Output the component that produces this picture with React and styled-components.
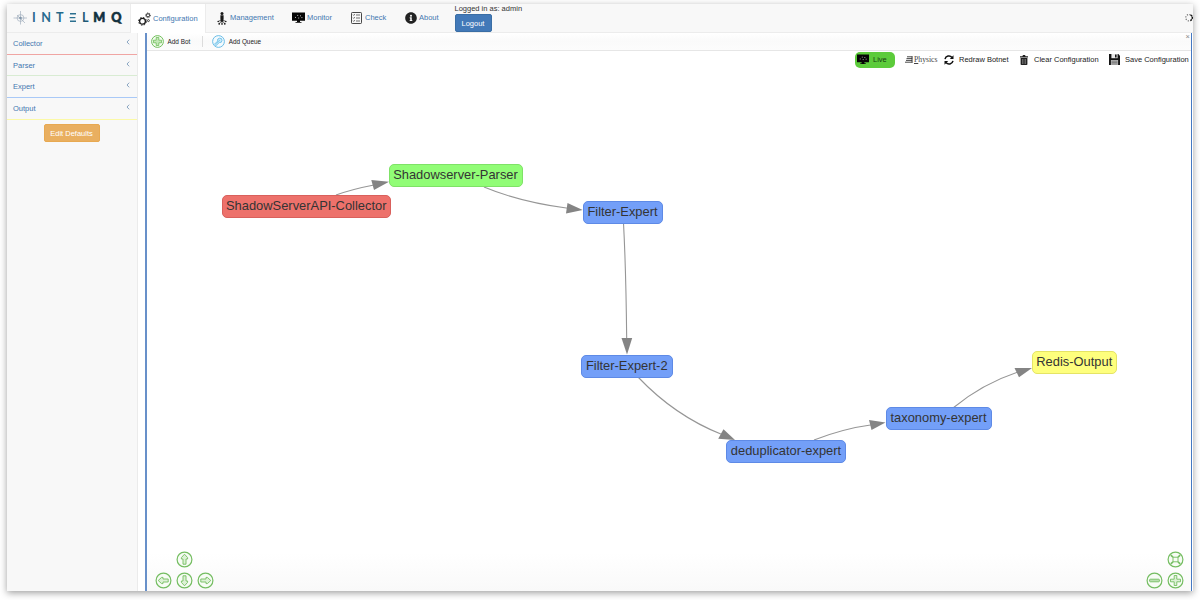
import React from "react";
import styled, { createGlobalStyle } from "styled-components";
import { FaInfoCircle } from "react-icons/fa";

const GlobalStyle = createGlobalStyle`
  * {
    box-sizing: border-box;
  }
  body {
    margin: 0;
    background: #fff;
    font-family: "Liberation Sans", Arial, sans-serif;
    font-size: 7.5px;
    color: #333;
  }
`;

const Page = styled.div`
  width: 1200px;
  height: 600px;
  padding: 4px 7px 9px;
  overflow: hidden;
`;

const AppWindow = styled.div`
  height: 587px;
  display: flex;
  flex-direction: column;
  background: #fff;
  box-shadow: 0 2px 7px rgba(0, 0, 0, 0.38);
`;

const Navbar = styled.nav`
  height: 29px;
  flex: none;
  display: flex;
  background: #f8f8f8;
  border-bottom: 1px solid #ececec;
`;

const Brand = styled.div`
  width: 123px;
  height: 28px;
`;

const NavItem = styled.a`
  width: ${(props) => props.$width}px;
  height: ${(props) => (props.$active ? 29 : 28)}px;
  padding-left: ${(props) => props.$pad}px;
  display: flex;
  align-items: center;
  gap: ${(props) => props.$gap || 2}px;
  color: #4377b0;
  background: ${(props) => (props.$active ? "#fff" : "transparent")};
  border-left: 1px solid ${(props) => (props.$active ? "#ececec" : "transparent")};
  border-right: 1px solid ${(props) => (props.$active ? "#ececec" : "transparent")};
  white-space: nowrap;

  svg {
    flex: none;
  }
  span {
    margin-top: -1px;
  }
`;

const Account = styled.div`
  padding-left: 0.5px;
  line-height: 9px;
  color: #333;
  flex: 1;
`;

const LogoutButton = styled.button`
  display: block;
  width: 37px;
  height: 18px;
  padding: 0;
  margin-top: 1px;
  border: 1px solid #3a6ea5;
  border-radius: 2px;
  background: #4279b8;
  color: #fff;
  font: inherit;
`;

const Spinner = styled.div`
  width: 9px;
  padding-top: 9px;
`;

const Main = styled.div`
  flex: 1;
  display: flex;
`;

const Sidebar = styled.aside`
  width: 131px;
  background: #f8f8f8;
  border-right: 1px solid #ebebeb;
`;

const BotGroup = styled.div`
  height: ${(props) => props.$height}px;
  padding: 0 7px 0 6px;
  display: flex;
  justify-content: space-between;
  align-items: center;
  color: #4377b0;
  border-bottom: 1px solid ${(props) => props.$color};

  svg {
    margin-top: -3px;
  }
`;

const DefaultsButton = styled.button`
  display: block;
  width: 56px;
  height: 18px;
  margin: 4px 0 0 36.5px;
  padding: 0;
  border: 1px solid #e8a951;
  border-radius: 2px;
  background: #e9af60;
  color: #fff;
  font: inherit;
`;

const Network = styled.section`
  width: 1047px;
  margin-left: 7px;
  display: flex;
  flex-direction: column;
  border-left: 2px solid #6890c9;
  border-right: 1px solid #4478c2;
`;

const Manipulation = styled.div`
  height: 18px;
  padding-left: 4px;
  display: flex;
  align-items: center;
  background: linear-gradient(#fff, #fafafa 50%, #fcfcfc);
  border-bottom: 1px solid #e6e6e6;
  font-size: 6.4px;
  color: #222;
`;

const ManipulationItem = styled.div`
  display: flex;
  align-items: center;
  gap: 3.5px;
`;

const Separator = styled.i`
  width: 1px;
  height: 11px;
  margin: 0 9px 0 12px;
  background: #dcdcdc;
`;

const Close = styled.span`
  margin: -10px 1px 0 auto;
  font-size: 7.5px;
  color: #888;
`;

const Canvas = styled.div`
  position: relative;
  flex: 1;
  background: linear-gradient(#fff 93%, #f9f9f9);
`;

const Actions = styled.div`
  position: relative;
  height: 17px;
  display: flex;
  align-items: center;
  padding-left: 708px;
  color: #222;
  white-space: nowrap;
`;

const Action = styled.div`
  width: ${(props) => props.$width}px;
  display: flex;
  align-items: center;
  gap: ${(props) => props.$gap}px;

  svg {
    flex: none;
  }
`;

const LiveButton = styled.div`
  width: 40px;
  height: 16px;
  margin-right: 10px;
  padding-left: 2px;
  display: flex;
  align-items: center;
  gap: 4px;
  border-radius: 5px;
  background: #5ccb3b;
  color: #173d10;
`;

const Physics = styled.div`
  width: 39px;
  display: flex;
  align-items: center;
  gap: 1px;
  font-family: "Liberation Serif", serif;
  font-size: 7.7px;
  color: #444;

  u {
    text-decoration-thickness: 0.5px;
  }
`;

const Edges = styled.svg`
  position: absolute;
  left: 0;
  top: 0;
`;

const Bot = styled.div`
  position: absolute;
  left: ${(props) => props.$x - 147}px;
  top: ${(props) => props.$y - 51}px;
  width: ${(props) => props.$width}px;
  height: 23px;
  border: 1px solid ${(props) => props.$border};
  border-radius: 5px;
  background: ${(props) => props.$fill};
  color: #343434;
  font-size: 12.9px;
  line-height: 20px;
  text-align: center;
  white-space: nowrap;
`;

const Controls = styled.div`
  position: absolute;
  bottom: 2.5px;
  ${(props) => props.$side}: 7.5px;
  display: grid;
  grid-template-columns: repeat(${(props) => props.$columns}, 17px);
  gap: 4px;
`;

const ControlSlot = styled.div`
  grid-column: ${(props) => props.$column};
  grid-row: ${(props) => props.$row};
  height: 17px;
`;

const Logo = () => (
  <svg width="123" height="28" viewBox="7 4 123 28">
    <g fill="none" stroke="#a3b0be" strokeWidth="0.7">
      <circle cx="20.5" cy="18" r="3.4" />
      <path d="M13.5 18H27M20.5 11V24.5M17 15L25 23" />
    </g>
    <circle cx="20.5" cy="18" r="1.3" fill="#8296aa" />
    <g fontFamily="Lato, sans-serif" fontSize="12.6" fontWeight="700">
      <text x="32" y="22" fill="#29688f">I</text>
      <text x="41.2" y="22" fill="#286b90">N</text>
      <text x="56" y="22" fill="#25698a">T</text>
      <path d="M70 13.7H76M69.6 17.6H75.4M70 21.3H76" stroke="#2c7090" strokeWidth="1.4" />
      <text x="82" y="22" fill="#1f5975">L</text>
      <g fill="#12303f" stroke="#12303f" strokeWidth="0.6" fontWeight="900">
        <text x="93.2" y="22">M</text>
        <text x="111.3" y="22">Q</text>
      </g>
    </g>
  </svg>
);

const GearsIcon = () => (
  <svg width="13" height="14" viewBox="0 0 13 14" fill="none" stroke="#181818">
    <circle cx="4.5" cy="9.3" r="2.9" strokeWidth="1.3" />
    <circle cx="4.5" cy="9.3" r="3.9" strokeWidth="1" strokeDasharray="1.55 1.51" />
    <circle cx="10" cy="3.3" r="1.6" strokeWidth="0.9" />
    <circle cx="10" cy="3.3" r="2.4" strokeWidth="0.8" strokeDasharray="0.94 0.94" />
    <circle cx="10.4" cy="8.6" r="1" strokeWidth="0.8" />
  </svg>
);

const ManagementIcon = () => (
  <svg width="10" height="13" viewBox="0 0 10 13" fill="#181818">
    <circle cx="5" cy="1.6" r="1.5" />
    <path d="M3.4 3.2H6.6V7L5.9 9.7H4.1L3.4 7Z" />
    <path d="M5 8V12M4.3 8L1.2 9.5M5.7 8L8.8 9.5M4.4 9L2.3 11.7M5.6 9L7.7 11.7" stroke="#181818" strokeWidth="0.7" />
    <circle cx="1.2" cy="9.5" r="0.8" />
    <circle cx="8.8" cy="9.5" r="0.8" />
    <circle cx="2.2" cy="11.8" r="0.9" />
    <circle cx="7.8" cy="11.8" r="0.9" />
    <circle cx="5" cy="12.1" r="0.8" />
  </svg>
);

const ScreenIcon = ({ size = 13 }) => (
  <svg width={size} height={size * 0.85} viewBox="0 0 13 11">
    <path d="M0 0.5H13V8.8H8V10H9.5V10.8H3.5V10H5V8.8H0Z" fill="#050505" />
    <path d="M3 5.4H4M5.2 3.4H6.2M6.2 6H7.2M8 3.8H9M9.4 5.6H10.4" fill="none" stroke="#ccc" strokeWidth="0.9" />
  </svg>
);

const CheckIcon = () => (
  <svg width="11" height="12" viewBox="0 0 11 12" fill="none" stroke="#333">
    <rect x="0.5" y="0.5" width="10" height="11" rx="0.8" strokeWidth="0.9" />
    <path d="M2 2.7L2.7 3.4L3.8 2M2 5.7L2.7 6.4L3.8 5M2 8.7L2.7 9.4L3.8 8" strokeWidth="0.7" />
    <path d="M5 3H9M5 6H9M5 9H9" strokeWidth="0.7" />
  </svg>
);

const RefreshIcon = () => (
  <svg width="10" height="10" viewBox="0 0 10 10" fill="none" stroke="#111" strokeWidth="1.5">
    <path d="M1 4.1A4 4 0 0 1 8 2.4M9 5.9A4 4 0 0 1 2 7.6" />
    <path d="M9.5 0.3V4H5.8ZM0.5 9.7V6H4.2Z" fill="#111" stroke="none" />
  </svg>
);

const TrashIcon = () => (
  <svg width="8" height="10" viewBox="0 0 8 10">
    <path d="M0 1.2H2.4L3 0H5L5.6 1.2H8V2.4H0ZM0.6 3H7.4V9.2Q7.4 10 6.6 10H1.4Q0.6 10 0.6 9.2Z" fill="#222" />
    <path d="M2.5 4V9M4 4V9M5.5 4V9" stroke="#aaa" strokeWidth="0.5" />
  </svg>
);

const SaveIcon = () => (
  <svg width="11" height="11" viewBox="0 0 11 11">
    <path d="M0 0H9.3L11 1.7V11H0Z" fill="#151515" />
    <path d="M2.4 0H8.6V4.2H2.4Z" fill="#e9e9e9" />
    <path d="M6 0.4H7.6V3.6H6Z" fill="#151515" />
    <path d="M1.9 6H9.1V11H1.9Z" fill="#bbb" />
    <path d="M2.5 7.2H8.5M2.5 8.6H8.5M2.5 10H8.5" stroke="#555" strokeWidth="0.6" />
  </svg>
);

const PhysicsIcon = () => (
  <svg width="8" height="7" viewBox="0 0 8 7" stroke="#333" strokeWidth="0.9">
    <path d="M2 0.8H7.6M1.5 2.6H7.3M1 4.4H7.2M0 6.2H7.6M7 0.5V6.5" fill="none" />
  </svg>
);

const AddBotIcon = () => (
  <svg width="13" height="13" viewBox="0 0 13 13">
    <circle cx="6.5" cy="6.5" r="5.9" fill="#f3fbef" stroke="#62b84b" strokeWidth="0.9" />
    <path d="M5.2 2.5H7.8V5.2H10.5V7.8H7.8V10.5H5.2V7.8H2.5V5.2H5.2Z" fill="#c3e7b7" stroke="#62b84b" strokeWidth="0.7" />
  </svg>
);

const AddQueueIcon = () => (
  <svg width="13" height="13" viewBox="0 0 13 13" fill="none" stroke="#5bb7e4">
    <circle cx="6.5" cy="6.5" r="5.9" fill="#f3fafe" strokeWidth="0.9" />
    <path d="M2.5 9.2L5.7 6A2.2 2.2 0 1 1 7.3 7.5L4 10.6Z" fill="#ccebf9" strokeWidth="0.8" />
    <path d="M4.3 8.6L8 5" strokeWidth="0.6" />
  </svg>
);

const ARROW = "M8.5 3.2L11.6 6.6V8H10V13.2H7V8H5.4V6.6Z";

const ControlIcon = ({ type }) => (
  <svg width="17" height="17" viewBox="0 0 17 17" fill="none" stroke="#74bd61" strokeWidth="0.9">
    <circle cx="8.5" cy="8.5" r="7.4" fill="#f7fcf5" strokeWidth="1.2" />
    {type === "up" && <path d={ARROW} fill="#dcf1d5" />}
    {type === "right" && <path d={ARROW} fill="#dcf1d5" transform="rotate(90 8.5 8.5)" />}
    {type === "down" && <path d={ARROW} fill="#dcf1d5" transform="rotate(180 8.5 8.5)" />}
    {type === "left" && <path d={ARROW} fill="#dcf1d5" transform="rotate(270 8.5 8.5)" />}
    {type === "minus" && <rect x="3.6" y="7.2" width="9.8" height="2.6" rx="0.8" fill="#b9dfaf" />}
    {type === "plus" && (
      <path d="M7.2 3.5H9.8V7.2H13.5V9.8H9.8V13.5H7.2V9.8H3.5V7.2H7.2Z" fill="#dcf1d5" />
    )}
    {type === "fit" && (
      <>
        <rect x="6" y="6.2" width="5" height="4.6" fill="#f7fcf5" />
        <path d="M3.8 4.2L6 6.2M13.2 4.2L11 6.2M3.8 12.8L6 10.8M13.2 12.8L11 10.8" strokeWidth="1.6" />
      </>
    )}
  </svg>
);

const Chevron = () => (
  <svg width="4" height="6" viewBox="0 0 4 6" fill="none" stroke="#6f91b5" strokeWidth="0.8">
    <path d="M3.2 0.7L1 3L3.2 5.3" />
  </svg>
);

const groups = [
  { name: "Collector", color: "#f0a5a3", height: 22 },
  { name: "Parser", color: "#d9ecd3", height: 21 },
  { name: "Expert", color: "#a9c9f7", height: 22 },
  { name: "Output", color: "#fbf9a6", height: 22 },
];

const colors = {
  collector: { $fill: "#ed716b", $border: "#d9605c" },
  parser: { $fill: "#91fd76", $border: "#7fe267" },
  expert: { $fill: "#739ff8", $border: "#5e8ae6" },
  output: { $fill: "#feff7d", $border: "#e5e465" },
};

const bots = [
  { id: "ShadowServerAPI-Collector", type: "collector", x: 221.5, y: 194.5, width: 169.5 },
  { id: "Shadowserver-Parser", type: "parser", x: 388.5, y: 164, width: 134 },
  { id: "Filter-Expert", type: "expert", x: 582.5, y: 201, width: 80 },
  { id: "Filter-Expert-2", type: "expert", x: 581, y: 355, width: 91.5 },
  { id: "deduplicator-expert", type: "expert", x: 726, y: 440, width: 120 },
  { id: "taxonomy-expert", type: "expert", x: 885.5, y: 407, width: 106 },
  { id: "Redis-Output", type: "output", x: 1031.5, y: 351, width: 85.5 },
];

const queues = [
  { line: "M336 195Q353 189 374 185", head: "389,181.8 371.3,180 374,190" },
  { line: "M484 187Q520 202 568 208.3", head: "582.7,210 567.5,203 566,213.5" },
  { line: "M623.5 223Q626 270 626.7 340", head: "627,354.5 621.5,338 632.2,338" },
  { line: "M638 377Q675 416 722 434.5", head: "735,440 723.5,429.3 718.2,438.7" },
  { line: "M814 440Q844 428.5 872 424.8", head: "885.5,422.5 869,420 871.5,430" },
  { line: "M953 408Q982 384 1018 372", head: "1032,368 1014.5,368 1019,377.2" },
];

const App = () => {
  return (
    <Page>
      <GlobalStyle />
      <AppWindow>
        <Navbar>
          <Brand>
            <Logo />
          </Brand>
          <NavItem $active $width={76} $pad={7}>
            <GearsIcon />
            <span>Configuration</span>
          </NavItem>
          <NavItem $width={75} $pad={10} $gap={3}>
            <ManagementIcon />
            <span>Management</span>
          </NavItem>
          <NavItem $width={59} $pad={10}>
            <ScreenIcon />
            <span>Monitor</span>
          </NavItem>
          <NavItem $width={54} $pad={10} $gap={3}>
            <CheckIcon />
            <span>Check</span>
          </NavItem>
          <NavItem $width={60} $pad={9.5} $gap={2.5}>
            <FaInfoCircle size={12} color="#222" />
            <span>About</span>
          </NavItem>
          <Account>
            Logged in as: admin
            <LogoutButton>Logout</LogoutButton>
          </Account>
          <Spinner>
            <svg width="9" height="9" viewBox="0 0 9 9" fill="none" stroke="#777" strokeWidth="1.2">
              <circle cx="5" cy="4.7" r="3.2" strokeDasharray="1.2 1.3" />
              <path d="M6.5 1.8A3.2 3.2 0 0 1 6.5 7.6" stroke="#111" strokeWidth="1.4" strokeDasharray="1.9 0.7" />
            </svg>
          </Spinner>
        </Navbar>
        <Main>
          <Sidebar>
            {groups.map((group) => (
              <BotGroup key={group.name} $color={group.color} $height={group.height}>
                {group.name}
                <Chevron />
              </BotGroup>
            ))}
            <DefaultsButton>Edit Defaults</DefaultsButton>
          </Sidebar>
          <Network>
            <Manipulation>
              <ManipulationItem>
                <AddBotIcon />
                Add Bot
              </ManipulationItem>
              <Separator />
              <ManipulationItem>
                <AddQueueIcon />
                Add Queue
              </ManipulationItem>
              <Close>×</Close>
            </Manipulation>
            <Canvas>
              <Edges width="1044" height="540" viewBox="147 51 1044 540">
                {queues.map((queue) => (
                  <g key={queue.line}>
                    <path d={queue.line} fill="none" stroke="#969696" strokeWidth="1.1" />
                    <polygon points={queue.head} fill="#848484" />
                  </g>
                ))}
              </Edges>
              <Actions>
                <LiveButton>
                  <ScreenIcon size={12} />
                  Live
                </LiveButton>
                <Physics>
                  <PhysicsIcon />
                  <span>
                    <u>P</u>hysics
                  </span>
                </Physics>
                <Action $width={76} $gap={5}>
                  <RefreshIcon />
                  Redraw Botnet
                </Action>
                <Action $width={89} $gap={6}>
                  <TrashIcon />
                  Clear Configuration
                </Action>
                <Action $width={80} $gap={5}>
                  <SaveIcon />
                  Save Configuration
                </Action>
              </Actions>
              {bots.map((bot) => (
                <Bot key={bot.id} $x={bot.x} $y={bot.y} $width={bot.width} {...colors[bot.type]}>
                  {bot.id}
                </Bot>
              ))}
              <Controls $side="left" $columns={3}>
                <ControlSlot $column={2} $row={1}>
                  <ControlIcon type="up" />
                </ControlSlot>
                <ControlSlot $column={1} $row={2}>
                  <ControlIcon type="left" />
                </ControlSlot>
                <ControlSlot $column={2} $row={2}>
                  <ControlIcon type="down" />
                </ControlSlot>
                <ControlSlot $column={3} $row={2}>
                  <ControlIcon type="right" />
                </ControlSlot>
              </Controls>
              <Controls $side="right" $columns={2}>
                <ControlSlot $column={2} $row={1}>
                  <ControlIcon type="fit" />
                </ControlSlot>
                <ControlSlot $column={1} $row={2}>
                  <ControlIcon type="minus" />
                </ControlSlot>
                <ControlSlot $column={2} $row={2}>
                  <ControlIcon type="plus" />
                </ControlSlot>
              </Controls>
            </Canvas>
          </Network>
        </Main>
      </AppWindow>
    </Page>
  );
};

export default App;
